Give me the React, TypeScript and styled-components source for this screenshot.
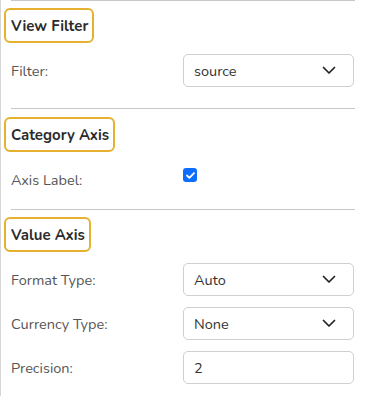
import styled, { createGlobalStyle } from 'styled-components'

const GlobalStyle = createGlobalStyle`
  * {
    box-sizing: border-box;
  }
  body {
    margin: 0;
    background: #fff;
    font-family: Nunito, Lato, "Open Sans", sans-serif;
  }
`

const Panel = styled.div`
  width: 365px;
  min-height: 396px;
  border-left: 1px solid #d6d6d6;
  background: #fff;
  overflow: hidden;
`

const Rule = styled.div`
  height: 1px;
  background: #c8c8c8;
  margin: 0 10px;
`

const Section = styled.section<{ bottom: number }>`
  display: flex;
  flex-direction: column;
  padding-bottom: ${props => props.bottom}px;
`

const Heading = styled.h3<{ top: number }>`
  align-self: flex-start;
  display: inline-flex;
  align-items: center;
  height: 35px;
  margin: ${props => props.top}px 0 0 3px;
  padding: 0 4px 0 5px;
  border: 2px solid #e5b12f;
  border-radius: 6px;
  font-size: 15px;
  font-weight: 700;
  color: #2b2b2b;
`

const Rows = styled.div`
  display: flex;
  flex-direction: column;
  gap: 11px;
  margin-top: 11px;
  padding: 0 11px 0 10px;
`

const Row = styled.div`
  display: grid;
  grid-template-columns: 172px 1fr;
  align-items: center;
  min-height: 33px;
`

const Label = styled.span`
  font-size: 14.5px;
  color: #555;
`

const Field = styled.div`
  display: flex;
  align-items: center;
  justify-content: space-between;
  height: 33px;
  padding: 0 17px 0 10px;
  border: 1px solid #cfcfcf;
  border-radius: 5px;
  font-size: 14.5px;
  color: #333;
`

const Check = styled.span`
  align-self: start;
  margin-top: 5px;
  width: 14px;
  height: 14px;
  border-radius: 3px;
  background: #0d6efd;
  display: flex;
  align-items: center;
  justify-content: center;
`

const Chevron = () => (
  <svg width="14" height="9" viewBox="0 0 14 9" fill="none">
    <path d="M1.5 1.5L7 7L12.5 1.5" stroke="#222" strokeWidth="1.7" strokeLinecap="round" strokeLinejoin="round" />
  </svg>
)

const Select = ({ value }: { value: string }) => (
  <Field>
    <span>{value}</span>
    <Chevron />
  </Field>
)

export default function App() {
  return (
    <>
      <GlobalStyle />
      <Panel>
        <Rule />
        <Section bottom={21}>
          <Heading top={7}>View Filter</Heading>
          <Rows>
            <Row>
              <Label>Filter:</Label>
              <Select value="source" />
            </Row>
          </Rows>
        </Section>
        <Rule />
        <Section bottom={13}>
          <Heading top={8}>Category Axis</Heading>
          <Rows>
            <Row>
              <Label>Axis Label:</Label>
              <Check>
                <svg width="9" height="7" viewBox="0 0 9 7" fill="none">
                  <path d="M1 3.5L3.4 5.8L8 1.2" stroke="#fff" strokeWidth="1.8" strokeLinecap="round" strokeLinejoin="round" />
                </svg>
              </Check>
            </Row>
          </Rows>
        </Section>
        <Rule />
        <Section bottom={10}>
          <Heading top={7}>Value Axis</Heading>
          <Rows>
            <Row>
              <Label>Format Type:</Label>
              <Select value="Auto" />
            </Row>
            <Row>
              <Label>Currency Type:</Label>
              <Select value="None" />
            </Row>
            <Row>
              <Label>Precision:</Label>
              <Field>
                <span>2</span>
              </Field>
            </Row>
          </Rows>
        </Section>
      </Panel>
    </>
  )
}
